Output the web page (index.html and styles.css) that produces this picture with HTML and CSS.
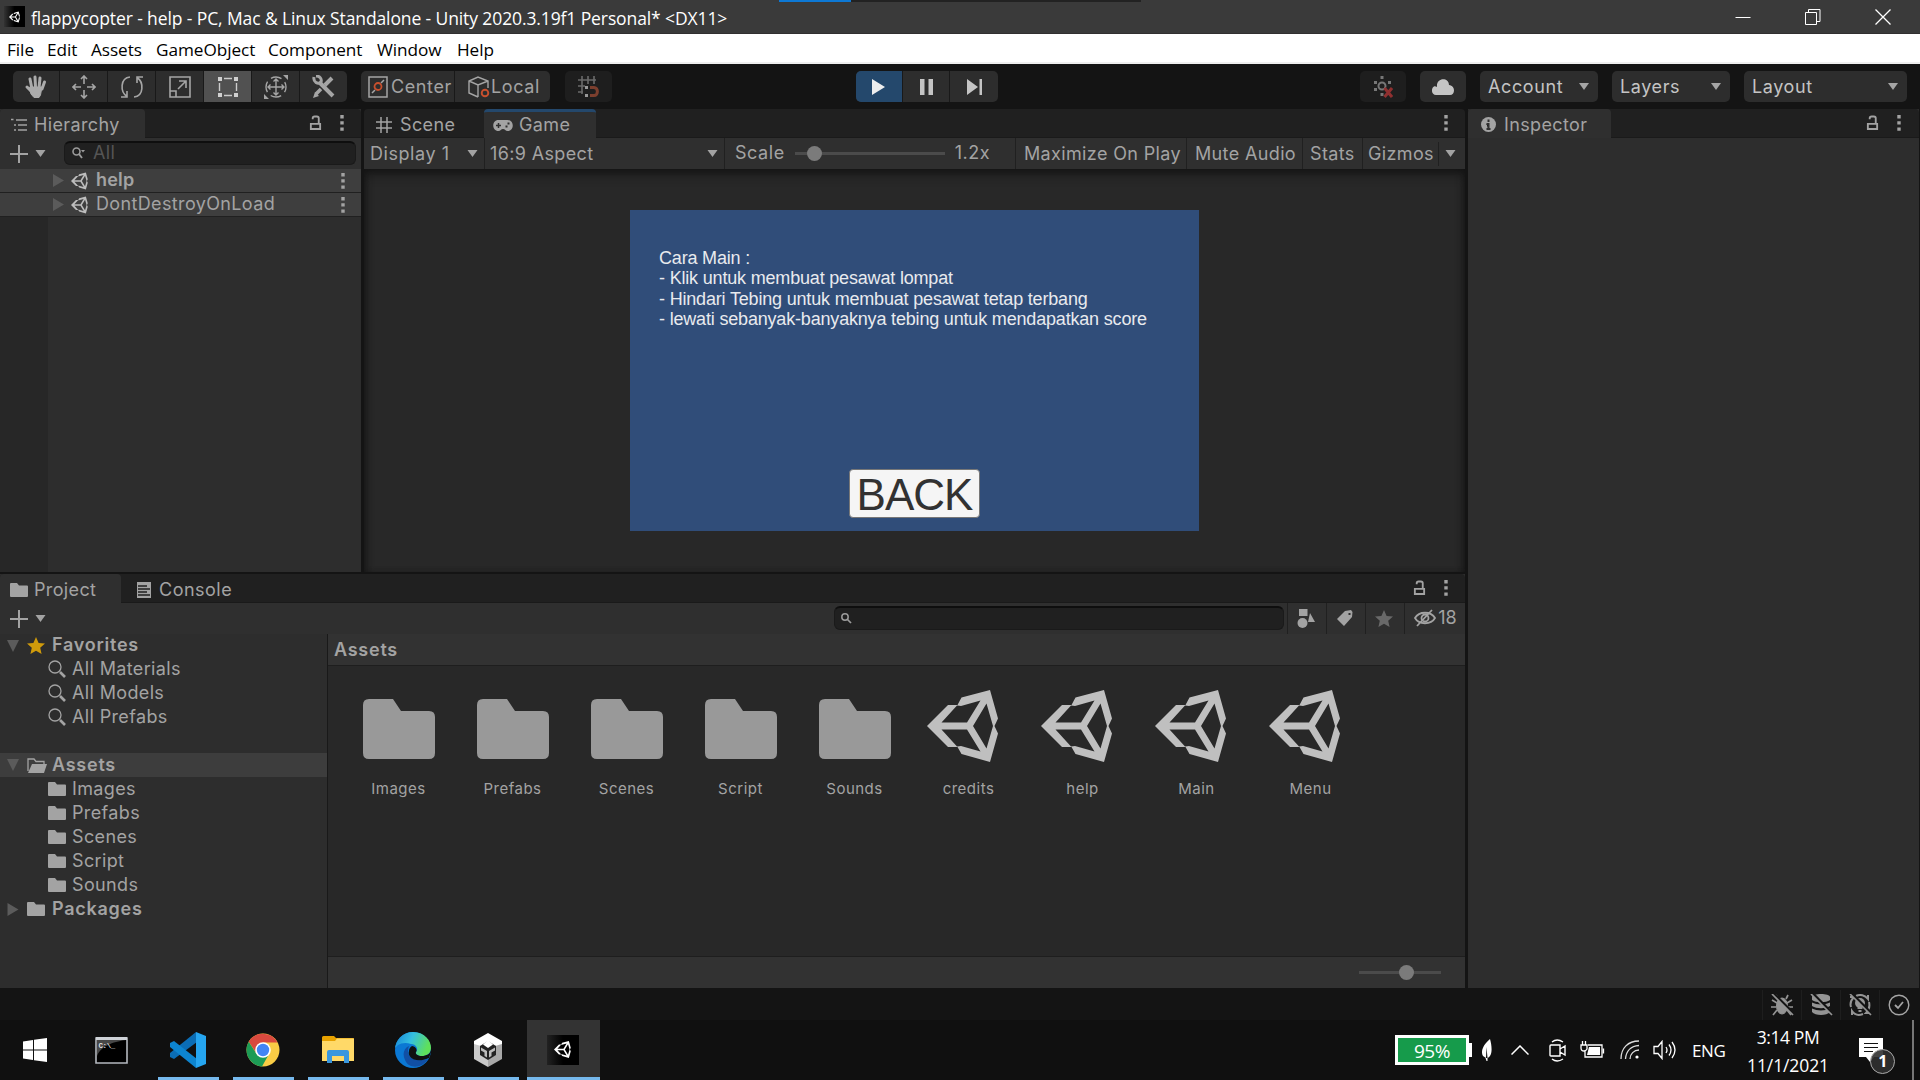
FILE: index.html
```html
<!DOCTYPE html>
<html lang="en">
<head>
<meta charset="utf-8">
<title>flappycopter - Unity</title>
<link rel="stylesheet" href="styles.css">
</head>
<body>
<svg class="defs" width="0" height="0">
  <symbol id="unity" viewBox="0 0 72 72"><path fill="currentColor" fill-rule="evenodd" d="M0 36 21 15H30.5L34.5 7.500 63 0 71 28.500 67.500 36 71 43.500 63 72 34.500 64 30.500 57H21ZM14.500 32.500H40L53.500 10.500 34 16 30 15.500ZM14.500 39.500H40L53.500 61.500 34 56 30 56.500ZM59.500 13.500 66 36 59.500 58.500 46 36Z"/></symbol>
  <symbol id="folder" viewBox="0 0 72 60"><path fill="currentColor" d="M6 0H30L38 12H66Q72 12 72 18V54Q72 60 66 60H6Q0 60 0 54V6Q0 0 6 0Z"/></symbol>
  <symbol id="sfolder" viewBox="0 0 18 14"><path fill="currentColor" d="M1 0H7L9 2.500H17Q18 2.500 18 3.500V13Q18 14 17 14H1Q0 14 0 13V1Q0 0 1 0Z"/></symbol>
  <symbol id="lock" viewBox="0 0 14 16"><path fill="none" stroke="currentColor" stroke-width="2" d="M2 9H12V14.500H2ZM4 4V3Q4 1 6 1H8.500Q10.500 1 10.500 3V9"/></symbol>
  <symbol id="kebab" viewBox="0 0 4 16"><path fill="currentColor" d="M.3 0h3.400v3.400H.3zM.3 6.200h3.400v3.400H.3zM.3 12.400h3.400v3.400H.3z"/></symbol>
  <symbol id="down" viewBox="0 0 10 7"><path fill="currentColor" d="M0 0H10L5 7Z"/></symbol>
  <symbol id="plus" viewBox="0 0 18 18"><path stroke="currentColor" stroke-width="2" d="M9 0V18M0 9H18"/></symbol>
  <symbol id="glass" viewBox="0 0 18 18"><circle cx="7" cy="7" r="6" fill="none" stroke="currentColor" stroke-width="1.300"/><path stroke="currentColor" stroke-width="2.600" d="M12 12 17 17"/></symbol>
  <symbol id="star" viewBox="0 0 18 17"><path fill="currentColor" d="M9 0 11.600 6 18 6.500 13.200 10.800 14.600 17 9 13.700 3.400 17 4.800 10.800 0 6.500 6.400 6Z"/></symbol>
  <symbol id="tri" viewBox="0 0 11 13"><path fill="currentColor" d="M0 0 11 6.500 0 13Z"/></symbol>
  <symbol id="triopen" viewBox="0 0 12 12"><path fill="currentColor" d="M0 0H12L6 12Z"/></symbol>
</svg>

<header class="titlebar">
  <span class="app-icon"><svg width="11" height="12"><use href="#unity"/></svg></span>
  <span class="title-text">flappycopter - help - PC, Mac &amp; Linux Standalone - Unity 2020.3.19f1 Personal* &lt;DX11&gt;</span>
  <span class="share-strip"></span>
  <div class="window-buttons">
    <svg width="16" height="16" fill="none" stroke="#fff"><path d="M.5 8.500H15.500"/></svg>
    <svg width="16" height="16" fill="none" stroke="#fff"><path d="M.5 3.500H11.500V15.500H.5ZM3.500 3V.5H15V12.500H12"/></svg>
    <svg width="16" height="16" fill="none" stroke="#fff" stroke-width="1.300"><path d="M.5.5 15.500 15.500M15.500.5.5 15.500"/></svg>
  </div>
</header>

<nav class="menubar">
  <span class="m-file">File</span><span class="m-edit">Edit</span><span class="m-assets">Assets</span><span class="m-go">GameObject</span><span class="m-comp">Component</span><span class="m-win">Window</span><span>Help</span>
</nav>

<div class="toolbar">
  <div class="group tools">
    <span><svg width="24" height="24" viewBox="0 0 24 24" fill="none" stroke="#ababab" stroke-linecap="round"><path stroke-width="3" d="M8 14 6 4M11.500 12 11 2M15 13 16 3M18 14 20.500 7M8 17 3 12"/><path fill="#ababab" d="M6 12H18L16.500 20 15 22.500H10L7 19Z"/></svg></span>
    <span><svg width="24" height="24" viewBox="0 0 24 24" fill="none" stroke="#a5a5a5" stroke-width="1.600"><path d="M12 1V9M12 15V23M1 12H9M15 12H23M9 4 12 1 15 4M9 20 12 23 15 20M4 9 1 12 4 15M20 9 23 12 20 15"/></svg></span>
    <span><svg width="24" height="24" viewBox="0 0 24 24" fill="none" stroke="#a5a5a5" stroke-width="1.600"><path d="M10 2C0 3 0 17 7 21.500M7 16V22H1M14 22C24 21 24 7 17 2.500M17 8V2H23"/></svg></span>
    <span><svg width="22" height="22" viewBox="0 0 22 22" fill="none" stroke="#a5a5a5" stroke-width="1.600"><path d="M1 1H21V21H1ZM1 15H7V21M9 13 17 5M10 5H17V12"/></svg></span>
    <span class="on"><svg width="22" height="22" viewBox="0 0 22 22" stroke="#ccc" stroke-width="1.400"><path fill="#d0d0d0" stroke="none" d="M1 1h4v4H1zM17 1h4v4h-4zM1 17h4v4H1zM17 17h4v4h-4z"/><path d="M7 2.500H15M7 19.500H15M2.500 7V15M19.500 7V15"/></svg></span>
    <span><svg width="26" height="26" viewBox="0 0 26 26" fill="none" stroke="#a5a5a5" stroke-width="1.400"><circle cx="13" cy="13" r="10" stroke-dasharray="11 4.700" stroke-dashoffset="5.500"/><path d="M13 5V21M5 13H21M10.500 7.500 13 5 15.500 7.500M10.500 18.500 13 21 15.500 18.500M7.500 10.500 5 13 7.500 15.500M18.500 10.500 21 13 18.500 15.500"/><path fill="#a5a5a5" stroke="none" d="M20 1H25V6ZM1 20V25H6Z"/></svg></span>
    <span><svg width="24" height="24" viewBox="0 0 24 24" fill="none" stroke="#a5a5a5"><path stroke-width="4" d="M7 7 21 21M20 3 13 10"/><path stroke-width="3" d="M2 2C1 7 6 10 9 7 10 4 8 1 4 1"/><path stroke-width="3.500" d="M9 14 4 19"/><path fill="#a5a5a5" stroke="none" d="M1 23 3 17 7 21Z"/></svg></span>
  </div>
  <div class="group pivot">
    <span class="p1"><svg width="20" height="22" viewBox="0 0 20 22" fill="none" stroke="#a5a5a5" stroke-width="1.500"><path d="M1 1H19V21H1ZM4 17 7 14M13 7 16 4"/><circle cx="10" cy="10.500" r="3.500" stroke="#c8502e" stroke-width="1.800"/></svg><b>Center</b></span>
    <span class="p2"><svg width="22" height="22" viewBox="0 0 22 22" fill="none" stroke="#a5a5a5" stroke-width="1.400"><path d="M10 21 1 17V5L10 1 20 5V12M1 5 10 9 20 5M10 9V21"/><circle cx="17" cy="17" r="3.300" stroke="#c8502e" stroke-width="1.900"/></svg><b>Local</b></span>
  </div>
  <div class="group snap dim"><svg width="22" height="22" viewBox="0 0 22 22" fill="none" stroke="#6b6b6b" stroke-width="1.600"><path d="M0 4H18M4 0V18M10 0V8M16 0V8M0 10H7M0 16H5"/><path stroke="#7c3f2e" stroke-width="3" d="M12 11.500H16C20.500 11.500 20.500 19.500 16 19.500H12"/><path stroke="#999" stroke-width="3" d="M7 11.500H10M7 19.500H10"/></svg></div>
  <div class="group play">
    <span class="go"><svg width="13" height="16"><path fill="#eee" d="M0 0 13 8 0 16Z"/></svg></span>
    <span><svg width="13" height="16"><path fill="#c4c4c4" d="M0 0h4.500v16H0zM8.500 0H13v16H8.500z"/></svg></span>
    <span><svg width="15" height="16"><path fill="#c4c4c4" d="M0 0 11 8 0 16ZM12.500 0H15V16H12.500z"/></svg></span>
  </div>
  <div class="group collab dim"><svg width="20" height="22" viewBox="0 0 20 22" fill="#777"><circle cx="9" cy="10" r="3.500" fill="none" stroke="#777" stroke-width="2"/><path d="M7.500 0h3v3h-3zM1 5h3v3H1zM15 5h3v3h-3zM1 12h3v3H1zM7.500 17h3v3h-3z"/><path stroke="#8f3030" stroke-width="3" d="M11.500 12 19 21M19 12 11.500 21"/></svg></div>
  <div class="group cloud"><svg width="22" height="16"><path fill="#c4c4c4" d="M4 16C-1 16-1 9 2 7.500 3 7 4 7.500 5 8 4-2 17-2 17 6 24 7 23 16 18 16Z"/></svg></div>
  <div class="group drop account"><b>Account</b><svg width="10" height="7"><use href="#down"/></svg></div>
  <div class="group drop layers"><b>Layers</b><svg width="10" height="7"><use href="#down"/></svg></div>
  <div class="group drop layout"><b>Layout</b><svg width="10" height="7"><use href="#down"/></svg></div>
</div>

<main class="workspace">
  <div class="left-area">
    <div class="top-row">
      <section class="hierarchy">
        <div class="tabs">
          <div class="tab active t-hier"><svg width="16" height="14" viewBox="0 0 16 14"><path stroke="currentColor" stroke-width="1.500" d="M0 1.500H2.500M5 2H16M3 7H5M7 7H16M3 12H5M7 12H16"/></svg><b>Hierarchy</b></div>
          <div class="tab-tools"><svg width="13" height="16"><use href="#lock"/></svg><svg width="4" height="16"><use href="#kebab"/></svg></div>
        </div>
        <div class="subbar">
          <svg class="plus" width="18" height="18"><use href="#plus"/></svg><svg class="tiny" width="11" height="7"><use href="#down"/></svg>
          <div class="search h-search"><svg width="14" height="12" viewBox="0 0 14 12"><circle cx="4.500" cy="4.500" r="3.500" fill="none" stroke="currentColor" stroke-width="1.600"/><path stroke="currentColor" stroke-width="1.800" d="M7 7 10 11"/><path fill="currentColor" d="M9 3H13L11 5.500Z"/></svg><span>All</span></div>
        </div>
        <div class="h-row"><svg class="arrow" width="11" height="13"><use href="#tri"/></svg><svg class="scene" width="17" height="18"><use href="#unity"/></svg><strong>help</strong><svg class="dots" width="4" height="16"><use href="#kebab"/></svg></div>
        <div class="h-row"><svg class="arrow" width="11" height="13"><use href="#tri"/></svg><svg class="scene" width="17" height="18"><use href="#unity"/></svg><b>DontDestroyOnLoad</b><svg class="dots" width="4" height="16"><use href="#kebab"/></svg></div>
        <div class="h-body"></div>
      </section>

      <section class="game">
        <div class="tabs">
          <div class="tab t-scene"><svg width="16" height="16" viewBox="0 0 16 16"><path stroke="currentColor" stroke-width="1.500" d="M5 0V16M11 0V16M0 5H16M0 11H16"/></svg><b>Scene</b></div>
          <div class="tab active blue t-game"><svg width="20" height="11" viewBox="0 0 20 11"><path fill="currentColor" d="M5.500 0H14.500C21.500 0 21.500 11 14.500 11 12.500 11 12 9 10 9S7.500 11 5.500 11C-1.500 11-1.500 0 5.500 0Z"/><path stroke="#2f2f2f" stroke-width="1.500" d="M5.500 3V8M3 5.500H8"/><path fill="#2f2f2f" d="M14.500 2.500h2v2h-2zM12.500 5.500h2v2h-2z"/></svg><b>Game</b></div>
          <div class="tab-tools"><svg width="4" height="16"><use href="#kebab"/></svg></div>
        </div>
        <div class="subbar gamebar">
          <div class="g-display"><b>Display 1</b><svg width="11" height="7"><use href="#down"/></svg></div>
          <div class="g-aspect"><b>16:9 Aspect</b><svg width="11" height="7"><use href="#down"/></svg></div>
          <div class="g-scale"><b>Scale</b><i class="slider"><i></i></i><b>1.2x</b></div>
          <div class="g-max"><b>Maximize On Play</b></div>
          <div class="g-mute"><b>Mute Audio</b></div>
          <div class="g-stats"><b>Stats</b></div>
          <div class="g-giz"><b>Gizmos</b><svg width="11" height="7"><use href="#down"/></svg></div>
        </div>
        <div class="viewport">
          <div class="canvas">
            <div class="help-text"><div>Cara Main :</div><div>- Klik untuk membuat pesawat lompat</div><div>- Hindari Tebing untuk membuat pesawat tetap terbang</div><div>- lewati sebanyak-banyaknya tebing untuk mendapatkan score</div></div>
            <div class="back">BACK</div>
          </div>
        </div>
      </section>
    </div>

    <section class="project">
      <div class="tabs">
        <div class="tab active t-proj"><svg width="18" height="14"><use href="#sfolder"/></svg><b>Project</b></div>
        <div class="tab t-cons"><svg width="16" height="16" viewBox="0 0 16 16"><path fill="currentColor" d="M1 0H15V16H1Z"/><path stroke="#202020" stroke-width="1.300" d="M2 4H11M2 7H14M2 10H11M2 13H14"/></svg><b>Console</b></div>
        <div class="tab-tools"><svg width="13" height="16"><use href="#lock"/></svg><svg width="4" height="16"><use href="#kebab"/></svg></div>
      </div>
      <div class="subbar projbar">
        <svg class="plus" width="18" height="18"><use href="#plus"/></svg><svg class="tiny" width="11" height="7"><use href="#down"/></svg>
        <div class="search p-search"><svg width="11" height="11" viewBox="0 0 11 11"><circle cx="4" cy="4" r="3.200" fill="none" stroke="currentColor" stroke-width="1.500"/><path stroke="currentColor" stroke-width="1.700" d="M6 6 10 10"/></svg></div>
        <span class="pb"><svg width="18" height="19"><path fill="currentColor" d="M2 0h8.500v7H2zM13 4 18 13H11z"/><circle cx="5.500" cy="14" r="5" fill="currentColor"/></svg></span>
        <span class="pb"><svg width="16" height="16"><path fill="currentColor" fill-rule="evenodd" d="M8 1 14 0 15.500 2 15 7 7 16 0 9ZM11.500 3v2h2V3Z"/></svg></span>
        <span class="pb dimstar"><svg width="18" height="17"><use href="#star"/></svg></span>
        <span class="pb hidden-count"><svg width="22" height="18" viewBox="0 0 22 18" fill="none" stroke="currentColor" stroke-width="1.800"><path d="M1 9C5 2 17 2 21 9 17 16 5 16 1 9ZM3 17 18 1"/><circle cx="11" cy="9" r="3.500"/></svg><b>18</b></span>
      </div>
      <div class="proj-body">
        <div class="tree">
          <div class="t-row top"><svg class="open" width="12" height="12"><use href="#triopen"/></svg><svg class="fav" width="18" height="17"><use href="#star"/></svg><strong>Favorites</strong></div>
          <div class="t-row"><svg width="18" height="18"><use href="#glass"/></svg><b>All Materials</b></div>
          <div class="t-row"><svg width="18" height="18"><use href="#glass"/></svg><b>All Models</b></div>
          <div class="t-row"><svg width="18" height="18"><use href="#glass"/></svg><b>All Prefabs</b></div>
          <div class="t-row"></div>
          <div class="t-row top sel"><svg class="open" width="12" height="12"><use href="#triopen"/></svg><svg class="of" width="20" height="15" viewBox="0 0 20 15"><path fill="none" stroke="currentColor" stroke-width="1.300" d="M1 13V1H7L9 3.500H17V6"/><path fill="currentColor" d="M5 6H20L17 15H1Z"/></svg><strong>Assets</strong></div>
          <div class="t-row"><svg width="18" height="14"><use href="#sfolder"/></svg><b>Images</b></div>
          <div class="t-row"><svg width="18" height="14"><use href="#sfolder"/></svg><b>Prefabs</b></div>
          <div class="t-row"><svg width="18" height="14"><use href="#sfolder"/></svg><b>Scenes</b></div>
          <div class="t-row"><svg width="18" height="14"><use href="#sfolder"/></svg><b>Script</b></div>
          <div class="t-row"><svg width="18" height="14"><use href="#sfolder"/></svg><b>Sounds</b></div>
          <div class="t-row top"><svg class="closed" width="11" height="13"><use href="#tri"/></svg><svg width="18" height="14"><use href="#sfolder"/></svg><strong>Packages</strong></div>
        </div>
        <div class="browser">
          <div class="crumb"><strong>Assets</strong></div>
          <div class="grid">
            <div class="item"><svg class="f" width="72" height="60"><use href="#folder"/></svg><b>Images</b></div>
            <div class="item"><svg class="f" width="72" height="60"><use href="#folder"/></svg><b>Prefabs</b></div>
            <div class="item"><svg class="f" width="72" height="60"><use href="#folder"/></svg><b>Scenes</b></div>
            <div class="item"><svg class="f" width="72" height="60"><use href="#folder"/></svg><b>Script</b></div>
            <div class="item"><svg class="f" width="72" height="60"><use href="#folder"/></svg><b>Sounds</b></div>
            <div class="item"><svg class="u" width="72" height="72"><use href="#unity"/></svg><b>credits</b></div>
            <div class="item"><svg class="u" width="72" height="72"><use href="#unity"/></svg><b>help</b></div>
            <div class="item"><svg class="u" width="72" height="72"><use href="#unity"/></svg><b>Main</b></div>
            <div class="item"><svg class="u" width="72" height="72"><use href="#unity"/></svg><b>Menu</b></div>
          </div>
          <div class="zoombar"><i class="slider zs"><i></i></i></div>
        </div>
      </div>
    </section>
  </div>

  <section class="inspector">
    <div class="tabs">
      <div class="tab active t-insp"><svg width="15" height="15" viewBox="0 0 15 15"><circle cx="7.500" cy="7.500" r="7.500" fill="currentColor"/><path stroke="#2f2f2f" stroke-width="2" d="M7.500 2.500V5M5.500 7H7.500V12M5.500 12H9.500"/></svg><b>Inspector</b></div>
      <div class="tab-tools"><svg width="13" height="16"><use href="#lock"/></svg><svg width="4" height="16"><use href="#kebab"/></svg></div>
    </div>
  </section>
</main>

<footer class="statusbar">
  <span><svg width="24" height="22" viewBox="0 0 24 22" stroke="#949494" fill="#949494"><ellipse cx="12" cy="12" rx="5.500" ry="8"/><path fill="none" stroke-width="1.700" d="M8 5 6 1M16 5 18 1M7 9 2 6M17 9 22 6M6 13H1M18 13H23M7 16 3 21M17 16 21 21"/><path stroke="#141414" stroke-width="3" d="M4 0 24 20"/><path stroke-width="1.700" d="M2 0 23 21"/></svg></span>
  <span><svg width="24" height="22" viewBox="0 0 24 22"><path fill="#949494" d="M3 3C3-1 21-1 21 3V6C17 9 7 9 3 6ZM3 8.500C8 11 16 11 21 8.500V12C16 15 8 15 3 12ZM3 14.500C8 17 16 17 21 14.500V18C18 22 6 22 3 18Z"/><path stroke="#141414" stroke-width="3" d="M4 0 24 20"/><path stroke="#949494" stroke-width="1.700" d="M2 0 23 21"/></svg></span>
  <span><svg width="24" height="22" viewBox="0 0 24 22"><path fill="none" stroke="#949494" stroke-width="2" d="M8 2C12 0 17 1 20 5V1M21 8C22 12 21 16 18 19H22M15 20C10 22 6 20 4 17V21M3 13C2 10 3 6 6 3H2"/><circle cx="12" cy="9" r="5" fill="#949494"/><path fill="#949494" d="M9.500 12h5v3h-5zM10.500 16h3v2h-3z"/><path stroke="#141414" stroke-width="3" d="M4 0 24 20"/><path stroke="#949494" stroke-width="1.700" d="M2 0 23 21"/></svg></span>
  <span><svg width="22" height="22" viewBox="0 0 22 22" fill="none" stroke="#a5a5a5" stroke-width="1.400"><circle cx="11" cy="11" r="9.800"/><path stroke-width="1.800" d="M7 11 10 14 15 8"/></svg></span>
</footer>

<div class="taskbar">
  <div class="apps">
    <span class="app start"><svg width="24" height="24" viewBox="0 0 24 24" fill="#fff"><path d="M0 3.500 10 2V11.500H0ZM11 1.800 24 0V11.500H11ZM0 12.500H10V22L0 20.500ZM11 12.500H24V24L11 22.200Z"/></svg></span>
    <span class="app cmd"><svg width="33" height="28" viewBox="0 0 33 28"><path fill="#000" stroke="#b4b8bf" stroke-width="1.600" d="M1 2H32V27H1Z"/><path fill="#474747" d="M2 4H31C22 5 6 9 2 20Z"/><path fill="#cfd3d8" d="M1 1H32V4H1Z"/><text x="3.500" y="12" fill="#ddd" font-family="Liberation Mono" font-size="7.500" font-weight="700">C:\_</text></svg></span>
    <span class="app run"><svg width="37" height="36" viewBox="0 0 37 36"><path fill="#0b6db5" d="M1 21 27 0 28 10 5 27 1 25Z"/><path fill="#0d85d0" d="M1 11 5 9 28 27 27 36 1 15Z"/><path fill="#25a5f0" d="M27 0 37 4V32L27 36Z"/></svg></span>
    <span class="app run"><svg width="34" height="34" viewBox="0 0 34 34"><circle cx="17" cy="17" r="16.500" fill="#f9cc45"/><path fill="#d9493e" d="M2.700 8.700A16.500 16.500 0 0 1 31.500 9.500H17V17L11 21Z"/><path fill="#1c9b55" d="M2.700 8.700A16.500 16.500 0 0 0 16 33.500L23 21 17 24 10 20Z"/><circle cx="17" cy="17" r="7.800" fill="#fff"/><circle cx="17" cy="17" r="6.200" fill="#4285f4"/></svg></span>
    <span class="app run"><svg width="32" height="27" viewBox="0 0 32 27"><path fill="#e8a200" d="M0 1.500Q0 0 1.500 0H12L14 2H31Q32 2 32 3V10H0Z"/><path fill="#ffd968" d="M0 5H13L15 2.500H32V25H0Z"/><path fill="#3a97de" d="M5 27V16Q5 14 7 14H25Q27 14 27 16V27H22V20H10V27Z"/></svg></span>
    <span class="app run"><svg width="36" height="36" viewBox="0 0 36 36"><defs><linearGradient id="e1" x1="0" x2="1" y2=".3"><stop offset="0" stop-color="#1583d8"/><stop offset=".5" stop-color="#35bfe0"/><stop offset="1" stop-color="#5fe05a"/></linearGradient></defs><circle cx="18" cy="18" r="18" fill="#0b78d4"/><path fill="url(#e1)" d="M0 18C0 8 8 0 18 0 30 0 36 9 36 16 36 22 31 24 27 24 23 24 20 22 21 20 24 17 21 12 16 12 8 9 0 13 0 18Z"/><path fill="#114fa5" d="M14 14C10 24 18 31 33 27 28 36 14 38 10 28 7 22 9 16 14 14Z"/><path fill="#101010" d="M14 19C12 25 20 32 34 26L36 20V17C36 22 31 24 27 24 23 24 20 22 21 20 23 18 20 14 17 14 15 15 14 17 14 19Z"/></svg></span>
    <span class="app run"><svg width="30" height="34" viewBox="0 0 30 34"><path fill="#c9c9c9" d="M1 8 15 17V34L1 26Z"/><path fill="#a8a8a8" d="M29 8 15 17V34L29 26Z"/><path fill="#fff" d="M1 8 15 0 29 8V11L15 15 1 11Z"/><path fill="#222" d="M15 8 23 13V22L15 27 7 22V13Z"/><path fill="#fff" d="M15 7 20 11.500 15 15 10 11.500Z"/><path fill="#bbb" d="M8 14.500 14 18V24.500L11.500 23V19.500L8 17.500ZM22 14.500 16 18V24.500L18.500 23V19.500L22 17.500Z"/></svg></span>
    <span class="app run current"><i><svg width="17" height="17"><use href="#unity"/></svg></i></span>
  </div>
  <div class="tray">
    <div class="battery">95%</div>
    <svg class="leaf" width="10" height="23"><path fill="#fff" d="M8 0C2 5-2 12 1 17L4 19 4.500 8 5.500 19C11 17 10 7 8 0ZM3.500 19h2v3h-1z"/></svg>
    <svg class="caret" width="18" height="10" fill="none" stroke="#fff" stroke-width="1.500"><path d="M.5 9.500 9 1 17.500 9.500"/></svg>
    <svg class="meet" width="18" height="23" fill="none" stroke="#fff" stroke-width="1.400"><path d="M2 6H11V17H2Q1 17 1 16V7Q1 6 2 6M11 10 16 7V16L11 13M3 3Q8-1 14 3M3 20Q8 24 14 20"/></svg>
    <svg class="power" width="25" height="18" fill="none" stroke="#fff" stroke-width="1.300"><path d="M8 4H22V16H5V10M23.500 7.500V12.500M1 4H7V8Q6 10 4 10 1 10 1 7ZM2.500 0V4M5.500 0V4"/><path fill="#fff" stroke="none" d="M9 6H20V14H7Z"/></svg>
    <svg class="wifi" width="20" height="20" fill="none" stroke="#ddd" stroke-width="1.300"><path d="M1 19C1 8 8 1 19 1M5.500 19C6 11 11 6 19 5.500M10 19C10 14 14 10 19 10"/><circle cx="17" cy="17" r="1.600" fill="#fff" stroke="none"/></svg>
    <svg class="sound" width="24" height="20" fill="none" stroke="#fff" stroke-width="1.300"><path d="M1 6.500H5L9 1.500V18.500L5 13.500H1ZM13 7Q15 10 13 13M16 4.500Q20 10 16 15.500M19 2Q25 10 19 18"/></svg>
    <span class="lang">ENG</span>
    <div class="clock"><span class="time">3:14 PM</span><span class="date">11/1/2021</span></div>
    <div class="notif"><svg width="24" height="25"><path fill="#fff" d="M0 0H24V19H15L11 24 7 19H0Z"/><path stroke="#111" stroke-width="1.200" d="M5 5.500H19M5 9.500H19M5 13.500H14"/></svg><em>1</em></div>
    <i class="peek"></i>
  </div>
</div>
</body>
</html>
```
FILE: styles.css
```css
* { box-sizing: border-box; }
body { margin: 0; width: 1920px; height: 1080px; overflow: hidden; background: #141414; color: #a3a3a3; font: 18px/24px Inter, "Liberation Sans", sans-serif; letter-spacing: .36px; white-space: nowrap; display: flex; flex-direction: column; }
b { font-weight: 400; }
strong { font-weight: 600; letter-spacing: .75px; }
i, em { font-style: normal; }
svg { display: block; flex: none; }
.defs { position: absolute; }

.titlebar { height: 34px; flex: none; background: #3a3a3a; border-bottom: 1px solid #312f30; display: flex; align-items: center; padding-left: 4px; position: relative; color: #fff; font-family: "Open Sans", "Noto Sans", sans-serif; font-size: 17.5px; }
.app-icon { width: 21px; height: 21px; background: linear-gradient(90deg, #333, #000 50%); display: flex; align-items: center; justify-content: center; margin-right: 6px; }
.title-text { letter-spacing: -.11px; padding-top: 2px; }
.share-strip { position: absolute; left: 779px; top: 0; width: 362px; height: 2px; background: linear-gradient(90deg, #0d78d4 72px, #222 72px); }
.window-buttons { margin-left: auto; display: flex; gap: 54px; padding-right: 29px; }

.menubar { height: 30px; flex: none; background: #fff; border-bottom: 2px solid #efefef; display: flex; align-items: center; padding: 3px 0 0 7px; color: #000; font-family: "Open Sans", "Noto Sans", sans-serif; font-size: 17.2px; letter-spacing: -.05px; }
.m-file { width: 40px; }
.m-edit { width: 44px; }
.m-assets { width: 65px; }
.m-go { width: 112px; }
.m-comp { width: 109px; }
.m-win { width: 80px; }

.toolbar { height: 45px; display: flex; padding: 7px 13px 6px; flex: none; }
.group { height: 31px; background: #2d2d2d; border-radius: 5px; display: flex; align-items: center; overflow: hidden; flex: none; letter-spacing: .6px; }
.group > span { height: 100%; display: flex; align-items: center; justify-content: center; border-right: 1px solid #191919; }
.group > span:last-child { border-right: 0; }
.tools { width: 334px; }
.tools > span { width: 48px; }
.tools > span:first-child, .tools > span:last-child { width: 47px; }
.tools .on { background: #515151; }
.pivot { margin-left: 14px; width: 189px; }
.pivot > span { justify-content: flex-start; }
.p1 { width: 94px; padding-left: 7px; gap: 3px; }
.p2 { width: 95px; padding-left: 13px; gap: 1px; }
.dim { background: #1e1e1e; justify-content: center; }
.snap { margin-left: 15px; width: 47px; }
.play { margin-left: 244px; width: 142px; }
.play > span { width: 48px; }
.play > .go { width: 47px; background: #24486c; }
.collab { margin-left: 362px; width: 46px; }
.cloud { margin-left: 14px; width: 46px; justify-content: center; }
.drop { margin-left: 14px; width: 118px; padding: 0 9px 0 8px; justify-content: space-between; color: #c4c4c4; }
.drop svg { color: #a5a5a5; }
.layout { width: 163px; }

.workspace { height: 879px; flex: none; display: flex; gap: 3px; }
.left-area { width: 1465px; display: flex; flex-direction: column; gap: 2px; }
.top-row { height: 463px; display: flex; gap: 3px; }
.tabs { height: 29px; background: #202020; display: flex; flex: none; border-bottom: 1px solid #1a1a1a; border-radius: 4px 4px 0 0; }
.tab { height: 29px; display: flex; align-items: center; padding-top: 2px; flex: none; }
.active { background: #2f2f2f; border-radius: 4px 4px 0 0; }
.blue { border-top: 3px solid #24486c; padding-top: 0; }
.tab-tools { margin-left: auto; display: flex; gap: 18px; align-items: center; padding-right: 17px; }
.subbar { height: 31px; background: #2f2f2f; display: flex; align-items: center; flex: none; }
.hierarchy { width: 361px; background: #2d2d2d; display: flex; flex-direction: column; }
.t-hier { width: 145px; padding-left: 11px; gap: 7px; }
.plus { margin-left: 10px; }
.tiny { margin-left: 7px; }
.search { height: 24px; background: #202020; border: 1px solid #1a1a1a; border-top: 2px solid #0e0e0e; border-radius: 6px; display: flex; align-items: center; margin-bottom: 1px; }
.h-search { width: 292px; margin-left: 18px; padding: 0 0 1px 7px; gap: 7px; color: #9b9b9b; }
.h-search span { color: #555; }
.h-row { height: 24px; background: #3e3e3e; border-bottom: 1px solid #202020; display: flex; align-items: center; flex: none; padding-left: 53px; }
.h-row b, .h-row strong { margin-bottom: 2px; }
.h-row .arrow { color: #5b5b5b; }
.h-row .scene { margin: 0 8px 0 7px; color: #bdbdbd; }
.h-row strong { letter-spacing: .2px; }
.h-row .dots { margin-left: auto; margin-right: 16px; }
.h-body { flex: 1; background: linear-gradient(90deg, #272727 48px, #2d2d2d 48px); }

.game { width: 1101px; display: flex; flex-direction: column; }
.t-scene { width: 120px; padding-left: 12px; gap: 8px; }
.t-game { width: 112px; padding-left: 9px; gap: 6px; }
.gamebar > div { height: 31px; display: flex; align-items: center; border-right: 1px solid #202020; flex: none; }
.g-display { width: 121px; padding: 0 6px; justify-content: space-between; letter-spacing: .55px; }
.g-aspect { width: 240px; padding: 0 6px 0 5px; justify-content: space-between; }
.g-scale { width: 291px; padding: 0 0 1px 10px; gap: 10px; letter-spacing: .55px; }
.slider { width: 150px; height: 3px; background: #4b4b4b; display: flex; align-items: center; padding-left: 12px; }
.slider i { width: 15px; height: 15px; border-radius: 50%; background: #7b7b7b; flex: none; }
.g-max { width: 171px; padding-left: 8px; }
.g-mute { width: 116px; padding-left: 8px; }
.g-stats { width: 60px; padding-left: 7px; }
.gamebar > .g-giz { width: 102px; padding-left: 5px; border: 0; }
.g-giz b { width: 71px; border-right: 1px solid #202020; margin-right: 6px; }
.viewport { flex: 1; background: #282828; box-shadow: inset 0 10px 12px -6px #131313, inset 5px 0 9px -4px #151515, inset -5px 0 9px -4px #151515; display: flex; padding: 41px 0 0 266px; }
.canvas { width: 569px; height: 321px; background: #304d79; display: flex; flex-direction: column; align-items: center; justify-content: space-between; padding: 38px 0 13px; }
.help-text { align-self: flex-start; padding-left: 29px; color: #e8eaee; font: 18px/20.4px "Liberation Sans", Arial, sans-serif; letter-spacing: -.18px; }
.back { width: 131px; height: 49px; background: #f5f5f5; border: 1px solid #777; border-radius: 4px; color: #323232; font: 44px/49px "Liberation Sans", Arial, sans-serif; letter-spacing: -1px; text-align: center; }

.project { flex: 1; display: flex; flex-direction: column; background: #2d2d2d; }
.t-proj { width: 121px; padding-left: 10px; gap: 6px; }
.t-cons { padding-left: 15px; gap: 7px; letter-spacing: .5px; }
.p-search { width: 450px; margin-left: 788px; margin-right: 3px; padding-left: 6px; color: #9b9b9b; }
.pb { width: 39px; height: 31px; border-left: 1px solid #202020; display: flex; align-items: center; justify-content: center; flex: none; padding: 0 2px 1px 0; }
.dimstar { color: #696969; }
.hidden-count { width: 61px; padding-left: 3px; gap: 2px; letter-spacing: 0; }
.proj-body { flex: 1; display: flex; }
.tree { width: 328px; border-right: 1px solid #191919; }
.t-row { height: 24px; padding-left: 48px; display: flex; align-items: center; gap: 6px; }
.t-row:first-child { height: 23px; }
.t-row b, .t-row strong { margin-bottom: 1px; }
.top { padding-left: 7px; gap: 8px; }
.top strong { margin-left: -1px; }
.sel { background: #3d3d3d; }
.open, .closed { color: #5b5b5b; width: 12px; }
.fav { color: #d09b0b; }
.of { margin-right: -2px; }
.browser { flex: 1; background: #282828; display: flex; flex-direction: column; }
.crumb { height: 32px; background: #323232; border-bottom: 1px solid #1e1e1e; padding: 4px 0 0 6px; }
.grid { flex: 1; display: flex; padding-left: 14px; }
.item { width: 114px; flex: none; display: flex; flex-direction: column; align-items: center; font-size: 15px; letter-spacing: .5px; }
.item b { padding-right: 1px; }
.item .f { margin: 33px 0 18px; color: #999; }
.item .u { margin: 24px 12px 15px 0; color: #bfbfbf; }
.zoombar { height: 32px; background: #323232; border-top: 1px solid #1e1e1e; display: flex; align-items: center; justify-content: flex-end; padding: 0 24px 1px 0; }
.zs { width: 82px; padding-left: 40px; }

.inspector { flex: 1; background: #2d2d2d; margin-right: 1px; }
.t-insp { width: 143px; padding-left: 13px; gap: 8px; }
.inspector .tab-tools { padding-right: 18px; }

.statusbar { height: 32px; flex: none; display: flex; justify-content: flex-end; padding: 2px 2px 0 0; }
.statusbar span { width: 39px; border-left: 1px solid #1e1e1e; display: flex; align-items: center; justify-content: center; }

.taskbar { height: 60px; flex: none; background: #101010; display: flex; justify-content: space-between; color: #fff; font-family: "Open Sans", "Noto Sans", sans-serif; font-size: 17px; letter-spacing: -.4px; }
.apps { display: flex; gap: 14px; }
.app { width: 61px; height: 60px; display: flex; align-items: center; justify-content: center; border-bottom: 3px solid transparent; padding: 2px 2px 0 0; }
.start { width: 72px; }
.cmd { margin-left: -4px; }
.apps .cmd + .app { margin-left: 1px; }
.run { border-color: #76b9ed; }
.current { width: 73px; background: #333; margin-left: -6px; }
.current i { width: 32px; height: 30px; background: linear-gradient(90deg, #222, #000 50%); display: flex; align-items: center; justify-content: center; }
.tray { display: flex; align-items: center; }
.battery { width: 74px; height: 30px; border: 3px solid #fff; background: #169b4b; text-align: center; font-size: 19px; line-height: 26px; position: relative; }
.battery::after { content: ""; position: absolute; right: -6px; top: 5px; width: 3px; height: 14px; background: #fff; }
.leaf { margin-left: 13px; }
.caret { margin-left: 19px; }
.meet { margin-left: 20px; }
.power { margin-left: 13px; }
.wifi { margin-left: 15px; }
.sound { margin-left: 13px; }
.lang { margin-left: 15px; width: 35px; font-size: 17px; padding-top: 1px; }
.clock { width: 122px; display: flex; flex-direction: column; align-items: center; line-height: 28px; padding-top: 2px; font-size: 17.5px; letter-spacing: -.1px; }
.time { letter-spacing: -.4px; }
.notif { width: 37px; height: 44px; margin-left: 10px; position: relative; padding-top: 10px; }
.notif em { position: absolute; left: 11px; top: 21px; width: 25px; height: 25px; border: 1px solid #aaa; border-radius: 50%; background: #303030e6; text-align: center; line-height: 23px; font-weight: 700; font-size: 16px; }
.peek { width: 2px; height: 60px; background: #777; margin: 0 6px 0 16px; }
```
